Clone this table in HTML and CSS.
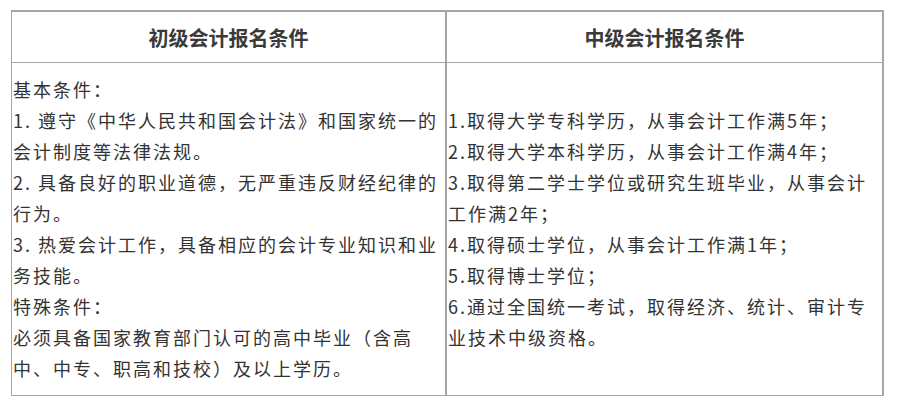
FILE: index.html
```html
<!DOCTYPE html>
<html lang="zh-CN">
<head>
<meta charset="utf-8">
<title>会计报名条件</title>
<link rel="stylesheet" href="styles.css">
</head>
<body>
<div class="table">
  <div class="th th-left">初级会计报名条件</div>
  <div class="th">中级会计报名条件</div>
  <div class="td td-left">
    <p>基本条件：</p>
    <p>1. 遵守《中华人民共和国会计法》和国家统一的<br>会计制度等法律法规。</p>
    <p>2. 具备良好的职业道德，无严重违反财经纪律的<br>行为。</p>
    <p>3. 热爱会计工作，具备相应的会计专业知识和业<br>务技能。</p>
    <p>特殊条件：</p>
    <p>必须具备国家教育部门认可的高中毕业（含高<br>中、中专、职高和技校）及以上学历。</p>
  </div>
  <div class="td td-right">
    <p>1.取得大学专科学历，从事会计工作满5年；</p>
    <p>2.取得大学本科学历，从事会计工作满4年；</p>
    <p>3.取得第二学士学位或研究生班毕业，从事会计<br>工作满2年；</p>
    <p>4.取得硕士学位，从事会计工作满1年；</p>
    <p>5.取得博士学位；</p>
    <p>6.通过全国统一考试，取得经济、统计、审计专<br>业技术中级资格。</p>
  </div>
</div>
</body>
</html>
```
FILE: styles.css
```css
html, body {
  margin: 0;
  padding: 0;
  background: #ffffff;
}
body {
  padding: 10px 0 0 11px;
  font-family: "Noto Sans CJK SC", "Noto Sans", sans-serif;
  color: #333333;
}
.table {
  display: grid;
  grid-template-columns: 435px 435px;
  grid-template-rows: 51px 332px;
  width: max-content;
  border-top: 2px solid #a6a6a6;
  border-right: 2px solid #a6a6a6;
  border-left: 1px solid #a6a6a6;
  border-bottom: 1px solid #a6a6a6;
}
.th {
  display: flex;
  align-items: center;
  justify-content: center;
  font-size: 20px;
  font-weight: 700;
  color: #3a3a3a;
  border-bottom: 1px solid #a6a6a6;
}
.th-left, .td-left {
  border-right: 2px solid #a6a6a6;
}
.td {
  font-size: 18px;
  letter-spacing: 2px;
  line-height: 31px;
  padding-left: 1px;
  white-space: nowrap;
}
.td p {
  margin: 0;
}
.td-left {
  padding-top: 11px;
}
.td-right {
  display: flex;
  flex-direction: column;
  justify-content: center;
}
```
